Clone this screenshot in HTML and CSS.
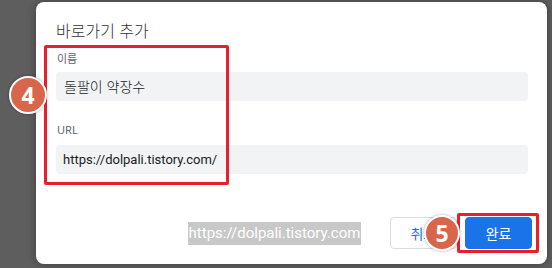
FILE: index.html
```html
<!doctype html>
<html lang="ko">
<head>
    <meta charset="UTF-8">
    <title>바로가기 추가</title>
    <link rel="stylesheet" href="styles.css">
</head>
<body>
<div class="screen">
    <div class="dialog">
        <div class="dialog-title">바로가기 추가</div>
        <div class="field">
            <div class="field-label">이름</div>
            <div class="field-input">돌팔이 약장수</div>
        </div>
        <div class="field field-url">
            <div class="field-label">URL</div>
            <div class="field-input url-text">https://dolpali.tistory.com/</div>
        </div>
        <div class="btn-row">
            <div class="btn btn-cancel">취소</div>
            <div class="btn btn-done">완료</div>
        </div>
    </div>

    <!-- 설명용 표시 -->
    <div class="mark mark-fields"></div>
    <div class="mark mark-done"></div>
    <div class="step step-4">4</div>
    <div class="step step-5">5</div>
    <div class="watermark">https://dolpali.tistory.com</div>
</div>
</body>
</html>
```

FILE: styles.css
```css
* {
    box-sizing: border-box;
}

body {
    margin: 0;
    background-color: #5e5e5e;
    font-family: "Noto Sans", "Noto Sans CJK KR", sans-serif;
    overflow: hidden;
}

.screen {
    position: relative;
    width: 552px;
    height: 268px;
    padding: 2px 0 0 36px;
}

.dialog {
    width: 511px;
    height: 262px;
    background-color: #fff;
    border-radius: 8px;
    box-shadow: 0 0 8px rgba(0, 0, 0, 0.35);
    padding: 18px 19px 0 20px;
}

.dialog-title {
    font-size: 16px;
    line-height: 20px;
    color: #303134;
    font-family: "Noto Sans CJK KR", sans-serif;
    font-weight: 300;
}

.field {
    margin-top: 12px;
}

.field-url {
    margin-top: 22px;
}

.field-label {
    font-size: 11px;
    line-height: 14px;
    color: #5f6368;
    margin-bottom: 6px;
    padding-left: 1px;
}

.field-url .field-label {
    margin-bottom: 8px;
}

.field-input {
    height: 29px;
    line-height: 29px;
    background-color: #f1f3f4;
    border-radius: 4px;
    padding-left: 8px;
    font-size: 14px;
    color: #202124;
    font-family: "Noto Sans CJK KR", sans-serif;
    font-weight: 300;
}

.url-text {
    font-family: Roboto, sans-serif;
    font-weight: normal;
    font-size: 13px;
    padding-left: 7px;
}

.btn-row {
    display: flex;
    justify-content: flex-end;
    gap: 8px;
    margin-top: 43px;
    margin-right: -4px;
}

.btn {
    width: 67px;
    height: 32px;
    line-height: 30px;
    text-align: center;
    border-radius: 4px;
    font-size: 14px;
    font-family: "Noto Sans CJK KR", sans-serif;
}

.btn-cancel {
    border: 1px solid #dadce0;
    color: #1a73e8;
}

.btn-done {
    border: 1px solid #1a73e8;
    background-color: #1a73e8;
    color: #fff;
}

.mark {
    position: absolute;
    border: 3px solid #e8202c;
    border-radius: 2px;
}

.mark-fields {
    left: 44px;
    top: 45px;
    width: 185px;
    height: 140px;
}

.mark-done {
    left: 457px;
    top: 213px;
    width: 82px;
    height: 40px;
}

.step {
    position: absolute;
    border-radius: 50%;
    background-color: #d9664a;
    border: 2px solid #fff;
    box-shadow: 0 0 3px rgba(0, 0, 0, 0.35);
    color: #fff;
    font-weight: bold;
    font-family: "Noto Sans", sans-serif;
    text-align: center;
}

.step-4 {
    left: 9px;
    top: 76px;
    width: 38px;
    height: 38px;
    line-height: 34px;
    font-size: 23px;
}

.step-5 {
    left: 424px;
    top: 215px;
    width: 36px;
    height: 36px;
    line-height: 32px;
    font-size: 23px;
}

.watermark {
    position: absolute;
    left: 188px;
    top: 222px;
    width: 173px;
    height: 23px;
    line-height: 23px;
    background-color: #c8c8c8;
    color: #fff;
    font-size: 15px;
    font-family: Roboto, sans-serif;
    text-align: center;
    white-space: nowrap;
}
```
